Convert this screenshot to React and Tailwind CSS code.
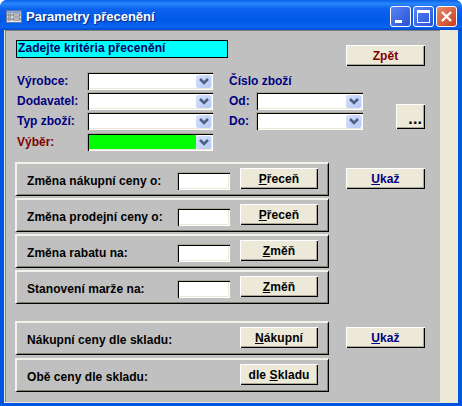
const font = { fontFamily: '"Liberation Sans", Arial, sans-serif' };

const bevel = "shadow-[inset_1px_1px_0_#ffffff,inset_-1px_-1px_0_#000000,inset_-2px_-2px_0_#aca899]";
const sunken = "shadow-[inset_1px_1px_0_#aca899,inset_2px_2px_0_#000000,inset_-1px_-1px_0_#ffffff,inset_-2px_-2px_0_#ece9d8]";

function Chevron() {
  return (
    <svg width="10" height="7" viewBox="0 0 10 7" className="block">
      <path d="M1 1 L5 5 L9 1" fill="none" stroke="#4d6185" strokeWidth="2.6" />
    </svg>
  );
}

function Combo({ width, fill = "bg-white" }) {
  return (
    <div className={`relative flex h-[18px] ${width} ${sunken} bg-white px-[2px] pt-[2px]`}>
      <div className={`h-[14px] flex-1 ${fill}`} />
      <div className="mt-[1px] flex h-[13px] w-[15px] items-center justify-center rounded-[2px] bg-gradient-to-br from-[#d8e3fb] to-[#b3c7f6]">
        <Chevron />
      </div>
    </div>
  );
}

function Btn({ children, width = "w-[78px]", height = "h-[21px]", color = "text-black", align = "items-center justify-center" }) {
  return (
    <div className={`flex ${width} ${height} ${align} bg-[#ece9d8] text-[12px] font-bold tracking-[0.1px] ${bevel} ${color}`}>
      {children}
    </div>
  );
}

function Section({ label, input = true, children }) {
  return (
    <div className="flex h-[34px] w-[314px] border-b border-l-2 border-r border-t-2 border-b-black border-l-[#f4f2e8] border-r-black border-t-[#f4f2e8] shadow-[inset_-1px_-1px_0_#808070]">
      <div className="ml-[10px] mt-[8px] h-[18px] w-[150px] text-[12px] font-bold leading-[18px] tracking-[0.05px] text-black">{label}</div>
      {input ? <div className={`mt-[8px] h-[18px] w-[53px] bg-white ${sunken}`} /> : <div className="w-[53px]" />}
      <div className="ml-[10px] mt-[4px]">{children}</div>
    </div>
  );
}

function ComboLabel({ children, color = "text-[#000080]" }) {
  return <div className={`w-[70px] text-[12px] font-bold leading-[18px] ${color}`}>{children}</div>;
}

function WinBtn({ className, children }) {
  return (
    <div className={`flex h-[21px] w-[21px] items-center justify-center rounded-[3px] border border-white ${className}`}>
      {children}
    </div>
  );
}

export default function App() {
  return (
    <div className="h-[406px] w-[462px] overflow-hidden bg-white" style={font}>
      <div className="flex h-full flex-col overflow-hidden rounded-t-[7px] bg-[#0054e3]">
        {/* Title bar */}
        <div className="flex h-[30px] items-center bg-[linear-gradient(180deg,#0a5fe8_0%,#2a86fb_12%,#0a62ee_30%,#0058e6_70%,#0a66f4_90%,#0248c8_100%)] pl-[6px] pr-[5px] pt-[3px]">
          <svg width="16" height="13" viewBox="0 0 16 13" className="shrink-0">
            <rect x="0" y="0" width="16" height="13" fill="#e8ecf4" />
            <rect x="0" y="0" width="16" height="3" fill="#8aa4d8" />
            <rect x="0.5" y="0.5" width="15" height="12" fill="none" stroke="#6878a0" />
            <rect x="2" y="4" width="3" height="2" fill="#fff" stroke="#333" strokeWidth="0.7" />
            <rect x="7" y="4" width="7" height="2" fill="#fff" stroke="#333" strokeWidth="0.7" />
            <rect x="2" y="8" width="3" height="2" fill="#fff" stroke="#333" strokeWidth="0.7" />
            <rect x="7" y="8" width="7" height="2" fill="#fff" stroke="#333" strokeWidth="0.7" />
          </svg>
          <div className="ml-[4px] text-[13px] font-bold text-white [text-shadow:1px_1px_0_#0a2a80]">Parametry přecenění</div>
          <div className="ml-auto flex gap-[2px]">
            <WinBtn className="bg-gradient-to-br from-[#5a84ee] to-[#2a50d8]">
              <div className="mr-[4px] mt-[10px] h-[3px] w-[7px] bg-white" />
            </WinBtn>
            <WinBtn className="bg-gradient-to-br from-[#5a84ee] to-[#2a50d8]">
              <div className="h-[13px] w-[13px] border border-t-[3px] border-white" />
            </WinBtn>
            <WinBtn className="bg-gradient-to-br from-[#e8886a] to-[#c83c18]">
              <svg width="13" height="13" viewBox="0 0 13 13">
                <path d="M2 2 L11 11 M11 2 L2 11" stroke="#fff" strokeWidth="2.4" />
              </svg>
            </WinBtn>
          </div>
        </div>

        {/* Client */}
        <div className="ml-[4px] mr-[4px] flex h-[373px] bg-[#ece9d8] pl-[1px] pb-[1px]">
          <div className="h-[372px] w-[435px] border-l border-t border-[#808080] bg-[#c0c0c0] pl-[9px] pt-[9px]">
            {/* Header row */}
            <div className="flex h-[26px] items-start">
              <div className="ml-[1px] h-[18px] w-[212px] border border-black bg-[#00ffff] pl-[1px] text-[12px] font-bold leading-[15px] tracking-[0.08px] text-[#000060]">
                Zadejte kritéria přecenění
              </div>
              <div className="ml-[118px] mt-[5px]">
                <Btn width="w-[79px]" color="text-[#800000]">Zpět</Btn>
              </div>
            </div>

            {/* Filter row */}
            <div className="mt-[6px] flex items-start">
              <div className="ml-[2px] flex w-[212px] flex-col gap-[2px]">
                <div className="flex"><ComboLabel>Výrobce:</ComboLabel><Combo width="w-[126px]" /></div>
                <div className="flex"><ComboLabel>Dodavatel:</ComboLabel><Combo width="w-[126px]" /></div>
                <div className="flex"><ComboLabel>Typ zboží:</ComboLabel><Combo width="w-[126px]" /></div>
                <div className="mt-[1px] flex"><ComboLabel color="text-[#800000]">Výběr:</ComboLabel><Combo width="w-[126px]" fill="bg-[#00ff00]" /></div>
              </div>
              <div className="flex flex-col gap-[2px]">
                <div className="h-[18px] text-[12px] font-bold leading-[18px] text-[#000080]">Číslo zboží</div>
                <div className="flex"><div className="w-[27px] text-[12px] font-bold leading-[18px] text-[#000080]">Od:</div><Combo width="w-[107px]" /></div>
                <div className="flex"><div className="w-[27px] text-[12px] font-bold leading-[18px] text-[#000080]">Do:</div><Combo width="w-[107px]" /></div>
              </div>
              <div className="ml-[33px] mt-[32px]">
                <Btn width="w-[29px]" height="h-[25px]" align="items-end justify-end pr-[3px] pb-[2px]">
                  <span className="text-[16px] leading-none">...</span>
                </Btn>
              </div>
            </div>

            {/* Sections with prices */}
            <div className="mt-[11px] flex items-start">
              <div className="flex flex-col gap-[2px]">
                <Section label="Změna nákupní ceny o:"><Btn><span><u>P</u>řeceň</span></Btn></Section>
                <Section label="Změna prodejní ceny o:"><Btn><span><u>P</u>řeceň</span></Btn></Section>
                <Section label="Změna rabatu na:"><Btn><span><u>Z</u>měň</span></Btn></Section>
                <Section label="Stanovení marže na:"><Btn><span><u>Z</u>měň</span></Btn></Section>
              </div>
              <div className="ml-[17px] mt-[6px]">
                <Btn width="w-[79px]" color="text-[#000080]"><span><u>U</u>kaž</span></Btn>
              </div>
            </div>

            <div className="mt-[17px] flex items-start">
              <div className="flex flex-col gap-[3px]">
                <Section label="Nákupní ceny dle skladu:" input={false}><Btn><span><u>N</u>ákupní</span></Btn></Section>
                <Section label="Obě ceny dle skladu:" input={false}><Btn><span>dle <u>S</u>kladu</span></Btn></Section>
              </div>
              <div className="ml-[17px] mt-[6px]">
                <Btn width="w-[79px]" color="text-[#000080]"><span><u>U</u>kaž</span></Btn>
              </div>
            </div>
          </div>
          <div className="h-full w-[18px] bg-[#ece9d8]" />
        </div>
        <div className="h-[3px] bg-[#0054e3]" />
      </div>
    </div>
  );
}
